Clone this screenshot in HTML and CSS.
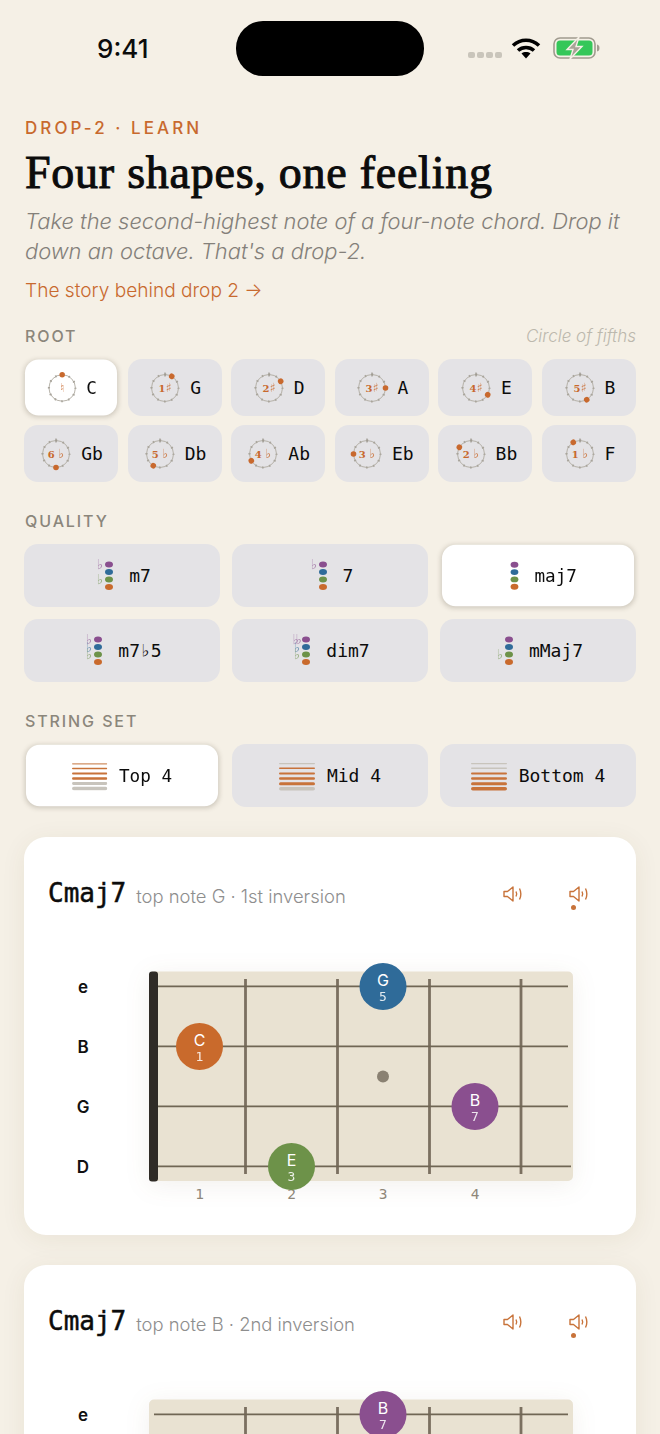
FILE: index.html
```html
<!DOCTYPE html>
<html>
<head>
<meta charset="utf-8">
<title>Four shapes, one feeling</title>
<link rel="stylesheet" href="styles.css">
</head>
<body>

<!-- shared icon parts -->
<svg class="defs" width="0" height="0">
  <symbol id="ring" viewBox="0 0 34 34">
    <circle cx="17" cy="17" r="13.5" class="ring-line"/>
    <circle cx="17" cy="17" r="13.5" class="ring-ticks"/>
    <line x1="17" y1="1.5" x2="17" y2="5.5" class="ring-top"/>
  </symbol>
  <symbol id="speaker" viewBox="0 0 20 16">
    <path d="M1 5.5H4.5L10 1V15L4.5 10.5H1Z" class="spk"/>
    <path d="M13 5.5Q14.4 8 13 10.5" class="spk"/>
    <path d="M16.5 2.5Q19.2 8 16.5 13.5" class="spk"/>
  </symbol>
  <symbol id="board" viewBox="0 0 612 288">
    <rect x="125" y="24.5" width="424" height="209.5" rx="5" class="wood"/>
    <g class="frets">
      <line x1="221.5" y1="32" x2="221.5" y2="227"/>
      <line x1="313.5" y1="32" x2="313.5" y2="227"/>
      <line x1="405.5" y1="32" x2="405.5" y2="227"/>
      <line x1="497" y1="32" x2="497" y2="227"/>
    </g>
    <g class="strings">
      <line x1="130" y1="39.4" x2="544" y2="39.4"/>
      <line x1="130" y1="99.4" x2="544" y2="99.4"/>
      <line x1="130" y1="159.4" x2="544" y2="159.4"/>
      <line x1="130" y1="219.4" x2="547" y2="219.4"/>
    </g>
    <circle cx="359" cy="129.5" r="6" class="inlay"/>
  </symbol>
</svg>

<div class="status">
  <span class="time">9:41</span>
  <div class="island"></div>
  <div class="status-right">
    <div class="signal"><i></i><i></i><i></i><i></i></div>
    <svg class="wifi" width="30" height="22" viewBox="0 0 30 22">
      <path d="M2 8.5C9.5 1.5 20.5 1.5 28 8.5" class="wifi-arc"/>
      <path d="M7 13.5C11.5 9.5 18.5 9.5 23 13.5" class="wifi-arc"/>
      <path d="M10.5 16.5C13 14.6 17 14.6 19.5 16.5L15 21.5Z"/>
    </svg>
    <svg class="battery" width="47" height="22" viewBox="0 0 47 22">
      <rect x="1" y="1" width="41" height="20" rx="6" class="batt-case"/>
      <rect x="3.5" y="3.5" width="36" height="15" rx="3.5" class="batt-fill"/>
      <path d="M44 7.5Q46.5 8 46.5 11T44 14.5Z" class="batt-nub"/>
      <path d="M26 0L14 12.5H20L17 22L29 9.5H23Z" class="batt-bolt"/>
    </svg>
  </div>
</div>

<div class="page">
  <div class="eyebrow">DROP-2 · LEARN</div>
  <h1>Four shapes, one feeling</h1>
  <p class="intro">Take the second-highest note of a four-note chord. Drop it down an octave. That's a drop-2.</p>
  <a class="story">The story behind drop 2 →</a>

  <div class="label-row">
    <span class="label">ROOT</span>
    <span class="hint">Circle of fifths</span>
  </div>
  <div class="roots">
    <div class="btn on">
      <svg class="key" viewBox="0 0 34 34"><use href="#ring"/><text x="17" y="21" class="acc"><tspan class="sym">♮</tspan></text><circle cx="17" cy="3.5" r="2.8" class="mark"/></svg>C
    </div>
    <div class="btn">
      <svg class="key" viewBox="0 0 34 34"><use href="#ring"/><text x="17" y="21" class="acc">1<tspan class="sym">♯</tspan></text><circle cx="17" cy="3.5" r="2.8" class="mark" transform="rotate(30 17 17)"/></svg>G
    </div>
    <div class="btn">
      <svg class="key" viewBox="0 0 34 34"><use href="#ring"/><text x="17" y="21" class="acc">2<tspan class="sym">♯</tspan></text><circle cx="17" cy="3.5" r="2.8" class="mark" transform="rotate(60 17 17)"/></svg>D
    </div>
    <div class="btn">
      <svg class="key" viewBox="0 0 34 34"><use href="#ring"/><text x="17" y="21" class="acc">3<tspan class="sym">♯</tspan></text><circle cx="17" cy="3.5" r="2.8" class="mark" transform="rotate(90 17 17)"/></svg>A
    </div>
    <div class="btn">
      <svg class="key" viewBox="0 0 34 34"><use href="#ring"/><text x="17" y="21" class="acc">4<tspan class="sym">♯</tspan></text><circle cx="17" cy="3.5" r="2.8" class="mark" transform="rotate(120 17 17)"/></svg>E
    </div>
    <div class="btn">
      <svg class="key" viewBox="0 0 34 34"><use href="#ring"/><text x="17" y="21" class="acc">5<tspan class="sym">♯</tspan></text><circle cx="17" cy="3.5" r="2.8" class="mark" transform="rotate(150 17 17)"/></svg>B
    </div>
    <div class="btn">
      <svg class="key" viewBox="0 0 34 34"><use href="#ring"/><text x="17" y="21" class="acc">6 <tspan class="sym">♭</tspan></text><circle cx="17" cy="3.5" r="2.8" class="mark" transform="rotate(180 17 17)"/></svg>Gb
    </div>
    <div class="btn">
      <svg class="key" viewBox="0 0 34 34"><use href="#ring"/><text x="17" y="21" class="acc">5 <tspan class="sym">♭</tspan></text><circle cx="17" cy="3.5" r="2.8" class="mark" transform="rotate(210 17 17)"/></svg>Db
    </div>
    <div class="btn">
      <svg class="key" viewBox="0 0 34 34"><use href="#ring"/><text x="17" y="21" class="acc">4 <tspan class="sym">♭</tspan></text><circle cx="17" cy="3.5" r="2.8" class="mark" transform="rotate(240 17 17)"/></svg>Ab
    </div>
    <div class="btn">
      <svg class="key" viewBox="0 0 34 34"><use href="#ring"/><text x="17" y="21" class="acc">3 <tspan class="sym">♭</tspan></text><circle cx="17" cy="3.5" r="2.8" class="mark" transform="rotate(270 17 17)"/></svg>Eb
    </div>
    <div class="btn">
      <svg class="key" viewBox="0 0 34 34"><use href="#ring"/><text x="17" y="21" class="acc">2 <tspan class="sym">♭</tspan></text><circle cx="17" cy="3.5" r="2.8" class="mark" transform="rotate(300 17 17)"/></svg>Bb
    </div>
    <div class="btn">
      <svg class="key" viewBox="0 0 34 34"><use href="#ring"/><text x="17" y="21" class="acc">1 <tspan class="sym">♭</tspan></text><circle cx="17" cy="3.5" r="2.8" class="mark" transform="rotate(330 17 17)"/></svg>F
    </div>
  </div>

  <div class="label quality-label">QUALITY</div>
  <div class="wide">
    <div class="btn tall">
      <svg class="stack" viewBox="0 0 24 32"><text x="7" y="9" class="fl c1">♭</text><text x="7" y="24" class="fl c3">♭</text><ellipse cx="16" cy="4.5" rx="4" ry="3" class="n1"/><ellipse cx="16" cy="12" rx="4" ry="3" class="n2"/><ellipse cx="16" cy="19.5" rx="4" ry="3" class="n3"/><ellipse cx="16" cy="27" rx="4" ry="3" class="n4"/></svg>m7
    </div>
    <div class="btn tall">
      <svg class="stack" viewBox="0 0 24 32"><text x="7" y="9" class="fl c1">♭</text><ellipse cx="16" cy="4.5" rx="4" ry="3" class="n1"/><ellipse cx="16" cy="12" rx="4" ry="3" class="n2"/><ellipse cx="16" cy="19.5" rx="4" ry="3" class="n3"/><ellipse cx="16" cy="27" rx="4" ry="3" class="n4"/></svg>7
    </div>
    <div class="btn tall on">
      <svg class="stack" viewBox="0 0 24 32"><ellipse cx="16" cy="4.5" rx="4" ry="3" class="n1"/><ellipse cx="16" cy="12" rx="4" ry="3" class="n2"/><ellipse cx="16" cy="19.5" rx="4" ry="3" class="n3"/><ellipse cx="16" cy="27" rx="4" ry="3" class="n4"/></svg>maj7
    </div>
    <div class="btn tall">
      <svg class="stack" viewBox="0 0 24 32"><text x="7" y="9" class="fl c1">♭</text><text x="7" y="16.5" class="fl c2">♭</text><text x="7" y="24" class="fl c3">♭</text><ellipse cx="16" cy="4.5" rx="4" ry="3" class="n1"/><ellipse cx="16" cy="12" rx="4" ry="3" class="n2"/><ellipse cx="16" cy="19.5" rx="4" ry="3" class="n3"/><ellipse cx="16" cy="27" rx="4" ry="3" class="n4"/></svg>m7♭5
    </div>
    <div class="btn tall">
      <svg class="stack" viewBox="0 0 24 32"><text x="5.5" y="9" class="fl c1 dbl">♭♭</text><text x="7" y="16.5" class="fl c2">♭</text><text x="7" y="24" class="fl c3">♭</text><ellipse cx="16" cy="4.5" rx="4" ry="3" class="n1"/><ellipse cx="16" cy="12" rx="4" ry="3" class="n2"/><ellipse cx="16" cy="19.5" rx="4" ry="3" class="n3"/><ellipse cx="16" cy="27" rx="4" ry="3" class="n4"/></svg>dim7
    </div>
    <div class="btn tall">
      <svg class="stack" viewBox="0 0 24 32"><text x="7" y="24" class="fl c3">♭</text><ellipse cx="16" cy="4.5" rx="4" ry="3" class="n1"/><ellipse cx="16" cy="12" rx="4" ry="3" class="n2"/><ellipse cx="16" cy="19.5" rx="4" ry="3" class="n3"/><ellipse cx="16" cy="27" rx="4" ry="3" class="n4"/></svg>mMaj7
    </div>
  </div>

  <div class="label string-label">STRING SET</div>
  <div class="wide">
    <div class="btn tall on">
      <svg class="lines" viewBox="0 0 36 30"><rect y="2" width="36" height="1.2" rx=".6" class="thin1"/><rect y="6.5" width="36" height="1.6" rx=".8" class="used"/><rect y="11.4" width="36" height="2" rx="1" class="used"/><rect y="16.2" width="36" height="2.6" rx="1.3" class="used"/><rect y="21.2" width="36" height="3" rx="1.5" class="idle"/><rect y="26" width="36" height="3.6" rx="1.8" class="idle"/></svg>Top 4
    </div>
    <div class="btn tall">
      <svg class="lines" viewBox="0 0 36 30"><rect y="2" width="36" height="1.2" rx=".6" class="idle"/><rect y="6.5" width="36" height="1.6" rx=".8" class="used"/><rect y="11.4" width="36" height="2" rx="1" class="used"/><rect y="16.2" width="36" height="2.6" rx="1.3" class="used"/><rect y="21.2" width="36" height="3" rx="1.5" class="used"/><rect y="26" width="36" height="3.6" rx="1.8" class="idle"/></svg>Mid 4
    </div>
    <div class="btn tall">
      <svg class="lines" viewBox="0 0 36 30"><rect y="2" width="36" height="1.2" rx=".6" class="idle"/><rect y="6.5" width="36" height="1.6" rx=".8" class="idle"/><rect y="11.4" width="36" height="2" rx="1" class="used"/><rect y="16.2" width="36" height="2.6" rx="1.3" class="used"/><rect y="21.2" width="36" height="3" rx="1.5" class="used"/><rect y="26" width="36" height="3.6" rx="1.8" class="used"/></svg>Bottom 4
    </div>
  </div>

  <div class="card">
    <div class="card-head">
      <span class="chord">Cmaj7</span>
      <span class="voicing">top note G · 1st inversion</span>
      <div class="sounds">
        <svg class="spk-icon" viewBox="0 0 20 16"><use href="#speaker"/></svg>
        <div class="spk-wrap">
          <svg class="spk-icon" viewBox="0 0 20 16"><use href="#speaker"/></svg>
          <i class="spk-dot"></i>
        </div>
      </div>
    </div>
    <svg class="fretboard" width="612" height="288" viewBox="0 0 612 288">
      <use href="#board"/>
      <rect x="125" y="24.5" width="9" height="210" rx="3" class="nut"/>
      <g class="str-names">
        <text x="59" y="46">e</text>
        <text x="59" y="106">B</text>
        <text x="59" y="166">G</text>
        <text x="59" y="226">D</text>
      </g>
      <g class="fret-nums">
        <text x="175.5" y="252">1</text>
        <text x="267.5" y="252">2</text>
        <text x="359" y="252">3</text>
        <text x="451" y="252">4</text>
      </g>
      <g class="note"><circle cx="175.5" cy="99.5" r="23.5" class="n4"/><text x="175.5" y="99" class="name">C</text><text x="175.5" y="114" class="deg">1</text></g>
      <g class="note"><circle cx="359" cy="39.5" r="23.5" class="n2"/><text x="359" y="39" class="name">G</text><text x="359" y="54" class="deg">5</text></g>
      <g class="note"><circle cx="451" cy="159.5" r="23.5" class="n1"/><text x="451" y="159" class="name">B</text><text x="451" y="174" class="deg">7</text></g>
      <g class="note"><circle cx="267.5" cy="219.5" r="23.5" class="n3"/><text x="267.5" y="219" class="name">E</text><text x="267.5" y="234" class="deg">3</text></g>
    </svg>
  </div>

  <div class="card">
    <div class="card-head">
      <span class="chord">Cmaj7</span>
      <span class="voicing">top note B · 2nd inversion</span>
      <div class="sounds">
        <svg class="spk-icon" viewBox="0 0 20 16"><use href="#speaker"/></svg>
        <div class="spk-wrap">
          <svg class="spk-icon" viewBox="0 0 20 16"><use href="#speaker"/></svg>
          <i class="spk-dot"></i>
        </div>
      </div>
    </div>
    <svg class="fretboard" width="612" height="288" viewBox="0 0 612 288">
      <use href="#board"/>
      <g class="str-names">
        <text x="59" y="46">e</text>
      </g>
      <g class="note"><circle cx="359" cy="39.5" r="23.5" class="n1"/><text x="359" y="39" class="name">B</text><text x="359" y="54" class="deg">7</text></g>
    </svg>
  </div>
</div>

</body>
</html>
```

FILE: styles.css
```css
html, body {
	margin: 0;
	height: 1434px;
	overflow: hidden;
}
body {
	background-color: #f5f0e6;
	color: #0c0c0c;
	font-family: Inter, "Noto Sans", sans-serif;
}
.defs { position: absolute; }

/* status bar */
.status {
	height: 97px;
	display: flex;
	align-items: flex-start;
}
.time {
	margin: 32px 0 0 97px;
	font-size: 26px;
	line-height: 34px;
	font-weight: 550;
	width: 139px;
}
.island {
	margin-top: 21px;
	width: 188px;
	height: 55px;
	border-radius: 27px;
	background: #000;
}
.status-right {
	margin: 37px 0 0 44px;
	display: flex;
	align-items: flex-start;
}
.signal {
	display: flex;
	gap: 2px;
	margin-top: 15px;
	margin-right: 9px;
}
.signal i {
	width: 7px;
	height: 6px;
	border-radius: 2px;
	background: #c9c5bb;
}
.wifi { margin-right: 12px; }
.wifi-arc { fill: none; stroke: #000; stroke-width: 3.6; }
.batt-case { fill: none; stroke: #a09b8f; stroke-width: 1.6; }
.batt-fill { fill: #35c759; }
.batt-nub { fill: #a09b8f; }
.batt-bolt { fill: #a9a498; stroke: #f5f0e6; stroke-width: 1.4; }

/* header */
.page { padding: 0 24px; }
.eyebrow {
	font-size: 17px;
	line-height: 20px;
	font-weight: 500;
	letter-spacing: 3.05px;
	color: #c8692e;
	margin-left: 1px;
	margin-top: 21px;
}
h1 {
	margin: 10px 0 0 1px;
	font-family: "Liberation Serif", serif;
	font-size: 46px;
	line-height: 50px;
	font-weight: 400;
	letter-spacing: 0.75px;
	-webkit-text-stroke: 1px #0c0c0c;
}
.intro {
	margin: 8px 0 0 1px;
	font-size: 21.9px;
	line-height: 30px;
	font-style: italic;
	font-weight: 300;
	color: #84807a;
	width: 610px;
}
.story {
	display: block;
	margin: 12px 0 0 1px;
	font-size: 19.1px;
	line-height: 24px;
	font-weight: 300;
	color: #c8692e;
}

/* selectors */
.label-row {
	display: flex;
	justify-content: space-between;
	align-items: baseline;
	margin-top: 24px;
}
.label {
	font-size: 16px;
	line-height: 20px;
	font-weight: 500;
	letter-spacing: 1.9px;
	color: #8b867b;
	margin-left: 1px;
}
.hint {
	font-size: 17px;
	font-style: italic;
	font-weight: 300;
	color: #bcb8ad;
}
.roots {
	display: grid;
	grid-template-columns: repeat(6, 1fr);
	grid-auto-rows: 57px;
	gap: 9px 9.6px;
	margin-top: 13px;
}
.wide {
	display: grid;
	grid-template-columns: repeat(3, 1fr);
	grid-auto-rows: 63px;
	gap: 12px;
	margin-top: 13px;
}
.quality-label { margin-top: 29px; }
.string-label { margin-top: 29px; }

.btn {
	display: flex;
	align-items: center;
	justify-content: center;
	gap: 8px;
	background: #e4e3e6;
	border-radius: 14px;
	font-family: "DejaVu Sans Mono", monospace;
	font-size: 18px;
}
.btn.on {
	background: #fff;
	transform: scale(0.98);
	box-shadow: 0 1px 5px rgba(60, 50, 30, 0.22);
}
.tall { gap: 12px; }
.key { width: 34px; height: 34px; }
.stack { width: 24px; height: 32px; margin-top: 1.5px; overflow: visible; }
.lines { width: 36px; height: 30px; }

.ring-line { fill: none; stroke: #b5b1a8; stroke-width: 1; }
.ring-ticks { fill: none; stroke: #a8a49b; stroke-width: 2.2; stroke-dasharray: 1.6 5.47; stroke-dashoffset: 0.8; }
.ring-top { stroke: #9a968d; stroke-width: 1.2; }
.mark { fill: #c8692e; }
.acc {
	font-family: "DejaVu Serif", serif;
	font-size: 10px;
	font-weight: 700;
	text-anchor: middle;
	fill: #c8692e;
}
.sym {
	font-family: "DejaVu Sans", sans-serif;
	font-size: 12.5px;
	font-weight: 400;
	opacity: 0.8;
}

.n1 { fill: #8a4f8f; }
.n2 { fill: #2f6b99; }
.n3 { fill: #6d9249; }
.n4 { fill: #c96a2c; }
.fl {
	font-family: "DejaVu Sans", sans-serif;
	font-size: 14px;
	text-anchor: middle;
	opacity: 0.6;
}
.dbl { letter-spacing: -3.5px; }
.c1 { fill: #8a4f8f; }
.c2 { fill: #2f6b99; }
.c3 { fill: #6d9249; }
.used { fill: #c8733a; }
.thin1 { fill: #cf9064; }
.idle { fill: #c8c4bc; }

/* voicing cards */
.card {
	margin-top: 30px;
	background: #fff;
	border-radius: 22px;
	box-shadow: 0 4px 26px rgba(90, 70, 30, 0.07);
	height: 398px;
}
.card-head {
	display: flex;
	align-items: center;
	height: 110px;
	padding: 0 47px 0 24px;
	box-sizing: border-box;
}
.chord {
	font-family: "DejaVu Sans Mono", monospace;
	font-size: 26px;
	margin-right: 10px;
	margin-top: 2px;
	-webkit-text-stroke: 0.5px #0c0c0c;
}
.voicing {
	font-size: 18.4px;
	font-weight: 300;
	color: #8e8e8e;
	margin-top: 8px;
}
.sounds {
	margin-left: auto;
	display: flex;
	gap: 46px;
	margin-top: 3px;
}
.spk-icon { width: 20px; height: 16px; display: block; }
.spk-wrap { position: relative; }
.spk-dot {
	position: absolute;
	left: 2px;
	top: 19px;
	width: 5px;
	height: 5px;
	border-radius: 50%;
	background: #c8733a;
}
.spk { fill: none; stroke: #c8733a; stroke-width: 1.4; stroke-linejoin: round; }

.fretboard { display: block; overflow: visible; }
.wood { fill: #e9e2d2; filter: drop-shadow(0 4px 12px rgba(90, 70, 30, 0.08)); }
.frets line { stroke: #7b7060; stroke-width: 2.8; }
.strings line { stroke: #706654; stroke-width: 1.6; }
.inlay { fill: #8a8172; }
.nut { fill: #2f2b26; }
.str-names text {
	font-family: Inter, sans-serif;
	font-size: 17px;
	font-weight: 600;
	text-anchor: middle;
	fill: #111;
}
.fret-nums text {
	font-family: "DejaVu Sans Mono", monospace;
	font-size: 14.5px;
	text-anchor: middle;
	fill: #8f8779;
}
.note text { text-anchor: middle; fill: #fff; }
.name { font-family: Inter, sans-serif; font-size: 16px; }
.deg { font-family: "DejaVu Sans Mono", monospace; font-size: 13px; opacity: 0.85; }
```
